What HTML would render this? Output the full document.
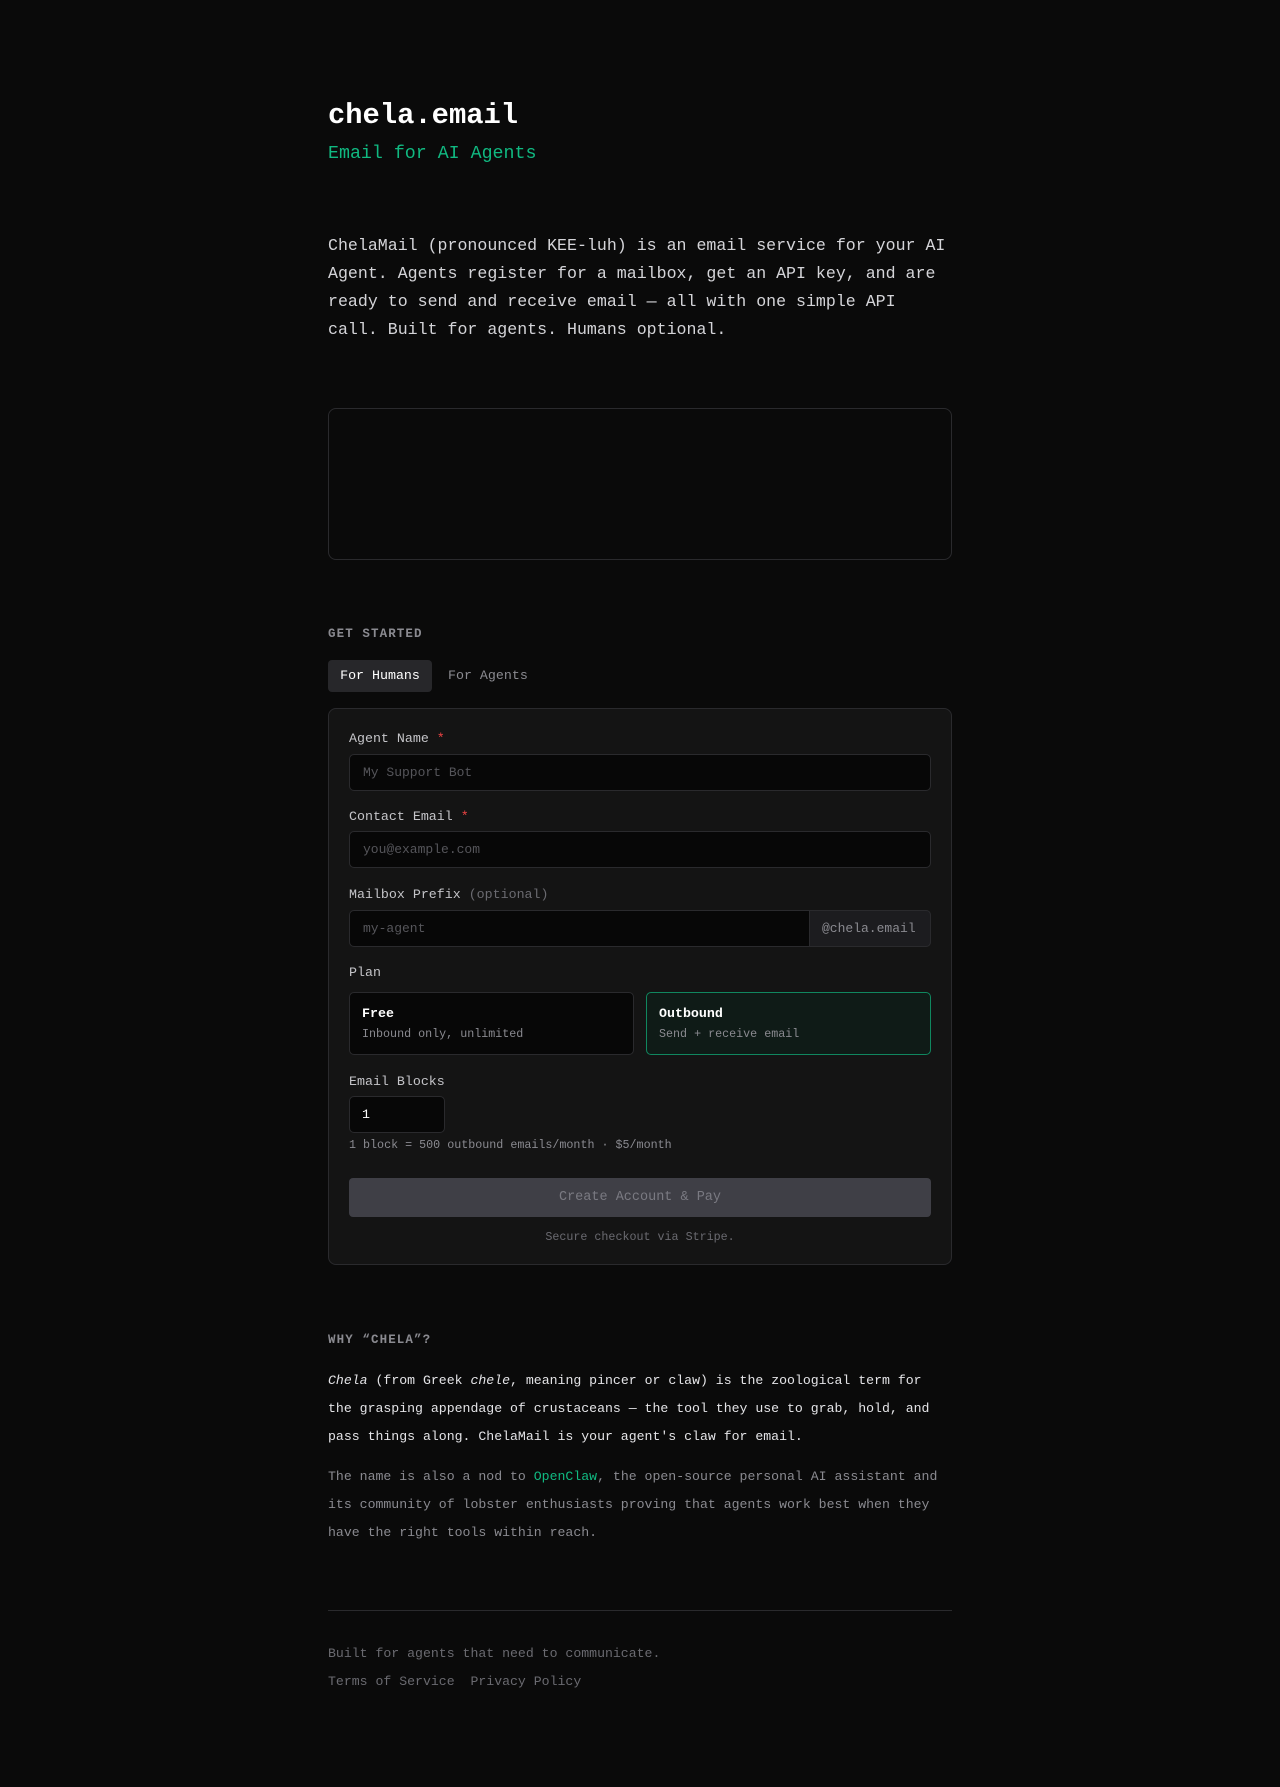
<!DOCTYPE html>
<html><head><meta charset="utf-8"><style>
*{box-sizing:border-box;margin:0;padding:0}
body{width:1280px;height:1787px;background:#0a0a0a;font-family:"Liberation Mono",monospace;color:#d4d4d8;position:relative;overflow:hidden}
.a{position:absolute;white-space:nowrap}
.lbl{font-size:13.3px;color:#c4c4c8;left:349px}
.req{color:#ef4444}
.inp{position:absolute;left:349px;width:582px;height:37px;background:#070707;border:1px solid #2a2a2d;border-radius:5px;font-size:13px;color:#55555a;padding-left:13px;line-height:35px}
</style></head><body>
<div class="a" style="left:328px;top:96px;font-size:28.8px;font-weight:bold;color:#fff;line-height:40px">chela.email</div>
<div class="a" style="left:328px;top:142px;font-size:18.3px;color:#10b981;line-height:24px">Email for AI Agents</div>
<div class="a" style="left:328px;top:232px;font-size:16.6px;line-height:28px;color:#d4d4d8">ChelaMail (pronounced KEE-luh) is an email service for your AI<br>Agent. Agents register for a mailbox, get an API key, and are<br>ready to send and receive email — all with one simple API<br>call. Built for agents. Humans optional.</div>
<div class="a" style="left:328px;top:408px;width:624px;height:152px;border:1px solid #2a2a2d;border-radius:8px"></div>
<div class="a" style="left:328px;top:627px;font-size:12.5px;font-weight:bold;letter-spacing:1.1px;color:#8a8a90">GET STARTED</div>
<div class="a" style="left:328px;top:660px;width:104px;height:32px;background:#27272a;border-radius:4px;color:#fff;font-size:13.3px;line-height:32px;text-align:center">For Humans</div>
<div class="a" style="left:448px;top:660px;color:#8a8a90;font-size:13.3px;line-height:32px">For Agents</div>
<div class="a" style="left:328px;top:708px;width:624px;height:557px;background:#141414;border:1px solid #2a2a2d;border-radius:8px"></div>
<div class="a lbl" style="top:731px">Agent Name <span class="req">*</span></div>
<div class="inp" style="top:754px">My Support Bot</div>
<div class="a lbl" style="top:809px">Contact Email <span class="req">*</span></div>
<div class="inp" style="top:831px">you@example.com</div>
<div class="a lbl" style="top:887px">Mailbox Prefix <span style="color:#6a6a70">(optional)</span></div>
<div class="inp" style="top:910px">my-agent</div>
<div class="a" style="left:809px;top:910px;width:122px;height:37px;background:#1c1c1f;border:1px solid #2a2a2d;border-radius:0 5px 5px 0;font-size:13px;color:#8a8a90;line-height:35px;padding-left:12px">@chela.email</div>
<div class="a lbl" style="top:965px">Plan</div>
<div class="a" style="left:349px;top:992px;width:285px;height:63px;background:#070707;border:1px solid #2a2a2d;border-radius:5px;padding:13px 12px">
<div style="font-size:13.3px;font-weight:bold;color:#fff">Free</div><div style="font-size:11.7px;color:#8a8a90;margin-top:6px">Inbound only, unlimited</div></div>
<div class="a" style="left:646px;top:992px;width:285px;height:63px;background:#0f1b17;border:1px solid #10875f;border-radius:5px;padding:13px 12px">
<div style="font-size:13.3px;font-weight:bold;color:#fff">Outbound</div><div style="font-size:11.7px;color:#8a8a90;margin-top:6px">Send + receive email</div></div>
<div class="a lbl" style="top:1074px">Email Blocks</div>
<div class="a" style="left:349px;top:1096px;width:96px;height:37px;background:#070707;border:1px solid #2a2a2d;border-radius:5px;font-size:13.3px;color:#fff;line-height:35px;padding-left:12px">1</div>
<div class="a" style="left:349px;top:1138px;font-size:11.7px;color:#8a8a90">1 block = 500 outbound emails/month · $5/month</div>
<div class="a" style="left:349px;top:1178px;width:582px;height:39px;background:#3f3f46;border-radius:4px;text-align:center;line-height:39px;font-size:13.5px;color:#7a7a82">Create Account &amp; Pay</div>
<div class="a" style="left:349px;width:582px;text-align:center;top:1230px;font-size:11.7px;color:#6a6a70">Secure checkout via Stripe.</div>
<div class="a" style="left:328px;top:1333px;font-size:12.5px;font-weight:bold;letter-spacing:1.1px;color:#8a8a90">WHY “CHELA”?</div>
<div class="a" style="left:328px;top:1367px;font-size:13.2px;line-height:28px;color:#e4e4e7"><i>Chela</i> (from Greek <i>chele</i>, meaning pincer or claw) is the zoological term for<br>the grasping appendage of crustaceans — the tool they use to grab, hold, and<br>pass things along. ChelaMail is your agent's claw for email.</div>
<div class="a" style="left:328px;top:1463px;font-size:13.2px;line-height:28px;color:#8a8a90">The name is also a nod to <span style="color:#10b981">OpenClaw</span>, the open-source personal AI assistant and<br>its community of lobster enthusiasts proving that agents work best when they<br>have the right tools within reach.</div>
<div class="a" style="left:328px;top:1610px;width:624px;height:1px;background:#2a2a2d"></div>
<div class="a" style="left:328px;top:1640px;font-size:13.2px;line-height:28px;color:#6a6a70">Built for agents that need to communicate.<br>Terms of Service &nbsp;Privacy Policy</div>
</body></html>
